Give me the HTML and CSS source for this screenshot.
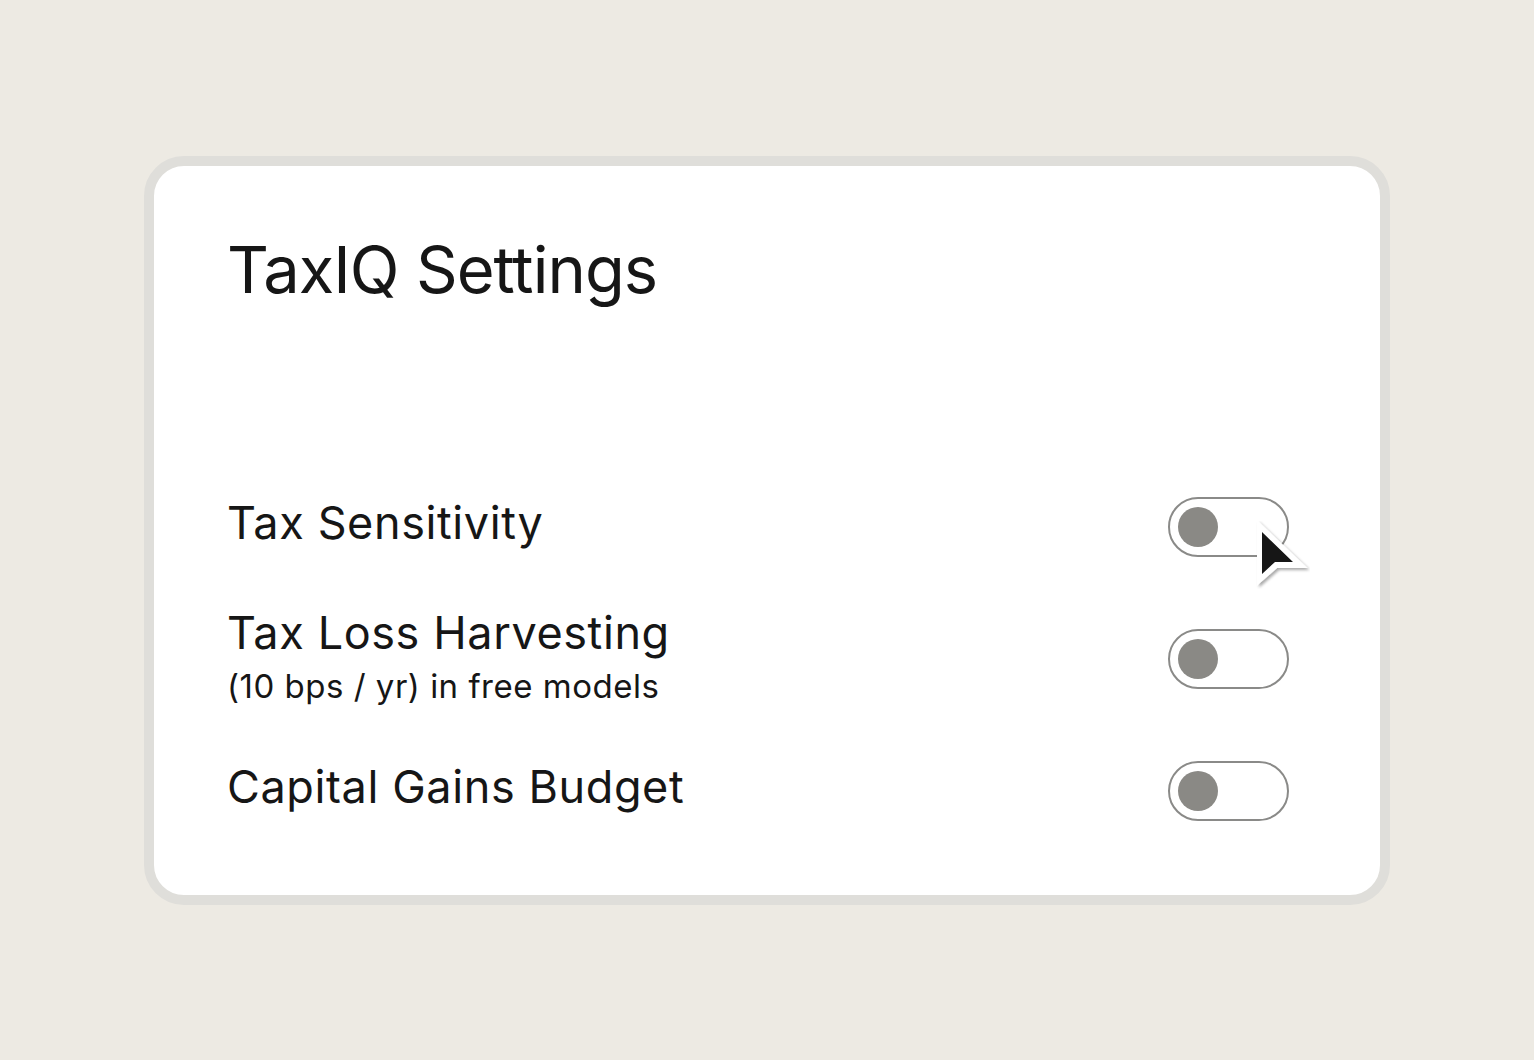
FILE: index.html
```html
<!DOCTYPE html>
<html lang="en">
<head>
<meta charset="utf-8">
<title>TaxIQ Settings</title>
<link rel="stylesheet" href="styles.css">
</head>
<body>
<main class="stage">
  <section class="card">
    <h1 class="title">TaxIQ Settings</h1>
    <div class="rows">
      <div class="row">
        <div class="label">Tax Sensitivity</div>
        <div class="toggle-wrap">
          <span class="toggle"><span class="knob"></span></span>
          <svg class="cursor" width="56" height="68" viewBox="0 0 56 68" aria-hidden="true">
            <defs>
              <filter id="sh" x="-30%" y="-30%" width="160%" height="160%">
                <feGaussianBlur in="SourceAlpha" stdDeviation="1.6"/>
                <feOffset dx="1.5" dy="2" result="b"/>
                <feComponentTransfer><feFuncA type="linear" slope="0.35"/></feComponentTransfer>
                <feMerge><feMergeNode/><feMergeNode in="SourceGraphic"/></feMerge>
              </filter>
            </defs>
            <path d="M6 6 L6 58 L22 44 L46 44 Z" fill="#fff" stroke="#fff" stroke-width="6" stroke-linejoin="miter" filter="url(#sh)"/>
            <path d="M8 11 L8 53 L21 41 L39 41 Z" fill="#161616"/>
          </svg>
        </div>
      </div>
      <div class="row">
        <div class="label-group">
          <div class="label">Tax Loss Harvesting</div>
          <div class="sub">(10 bps / yr) in free models</div>
        </div>
        <div class="toggle-wrap">
          <span class="toggle"><span class="knob"></span></span>
        </div>
      </div>
      <div class="row">
        <div class="label">Capital Gains Budget</div>
        <div class="toggle-wrap">
          <span class="toggle"><span class="knob"></span></span>
        </div>
      </div>
    </div>
  </section>
</main>
</body>
</html>
```

FILE: styles.css
```css
* { box-sizing: border-box; }

html, body {
  margin: 0;
  padding: 0;
  background: #edeae3;
}

body {
  font-family: Inter, "Noto Sans", "Liberation Sans", sans-serif;
  color: #161616;
}

.stage {
  width: 1534px;
  height: 1060px;
  display: flex;
  align-items: center;
  justify-content: center;
}

.card {
  width: 1246px;
  height: 749px;
  background: #ffffff;
  border: 10px solid #dfdeda;
  border-radius: 40px;
  padding: 64px 91px 0 73px;
}

.title {
  margin: 0;
  font-size: 65px;
  font-weight: 400;
  line-height: 79px;
  letter-spacing: -0.95px;
}

.rows {
  margin-top: 168px;
  display: flex;
  flex-direction: column;
  gap: 32px;
}

.row {
  height: 100px;
  display: flex;
  align-items: center;
  justify-content: space-between;
}

.label {
  font-size: 45px;
  line-height: 54px;
  letter-spacing: 0.6px;
  padding-bottom: 8px;
}

.label-group .label {
  line-height: 54px;
  padding-bottom: 0;
}

.sub {
  font-size: 33px;
  line-height: 52px;
  letter-spacing: 0.5px;
}

.toggle-wrap {
  position: relative;
  width: 121px;
  height: 60px;
}

.toggle {
  display: flex;
  align-items: center;
  width: 121px;
  height: 60px;
  border: 2px solid #8a8a88;
  border-radius: 30px;
  padding-left: 8px;
  background: #fff;
}

.knob {
  width: 40px;
  height: 40px;
  border-radius: 50%;
  background: #8a8985;
}

.cursor {
  position: absolute;
  left: 86px;
  top: 24px;
}
```
